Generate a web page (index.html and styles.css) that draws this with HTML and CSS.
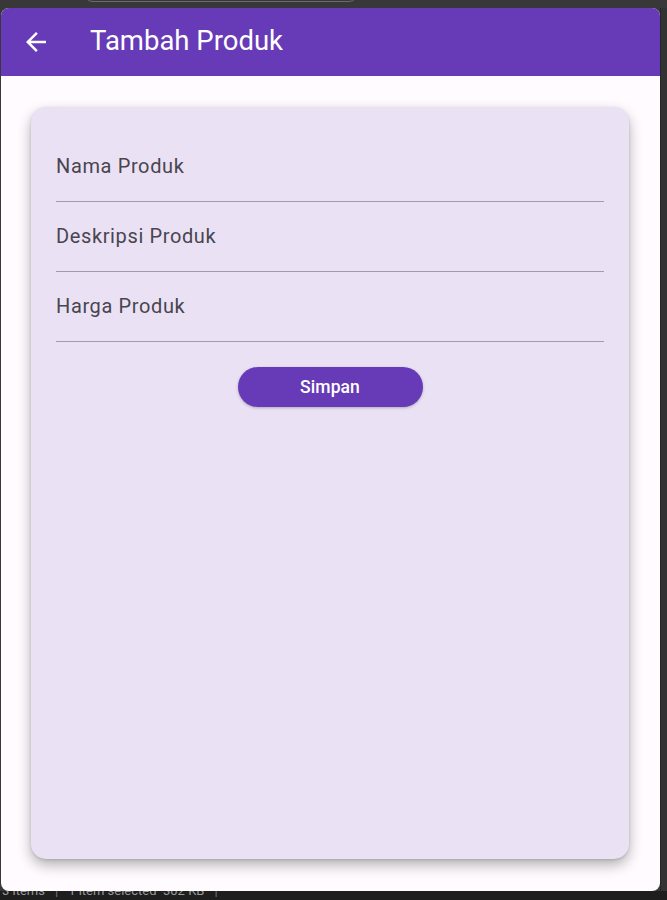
FILE: index.html
```html
<!DOCTYPE html>
<html lang="id">
<head>
<meta charset="utf-8">
<title>Tambah Produk</title>
<link rel="stylesheet" href="styles.css">
</head>
<body>
<div class="desk">
  <div class="topstrip"><div class="pill"></div></div>
  <div class="middle">
    <div class="window">
      <header class="appbar">
        <span class="back" aria-label="Kembali">
          <svg viewBox="0 0 24 24" width="30" height="30"><path fill="#ffffff" d="M20 11H7.83l5.59-5.59L12 4l-8 8 8 8 1.41-1.41L7.83 13H20v-2z"/></svg>
        </span>
        <h1 class="title">Tambah Produk</h1>
      </header>
      <main class="content">
        <section class="card">
          <div class="field"><span class="label">Nama Produk</span></div>
          <div class="field"><span class="label">Deskripsi Produk</span></div>
          <div class="field"><span class="label">Harga Produk</span></div>
          <div class="actions"><button class="btn">Simpan</button></div>
        </section>
      </main>
    </div>
    <div class="sideedge"></div>
  </div>
  <div class="status"><span>3 items</span><span class="sep">|</span><span>1 item selected&nbsp;&nbsp;302 KB</span><span class="sep">|</span></div>
</div>
</body>
</html>
```

FILE: styles.css
```css
html, body {
  margin: 0;
  padding: 0;
  background: #2c2c2c;
  overflow: hidden;
}

.desk {
  width: 667px;
  height: 900px;
  display: flex;
  flex-direction: column;
  font-family: Roboto, "Noto Sans", sans-serif;
}

.topstrip {
  height: 8px;
  background: #383838;
  overflow: hidden;
  flex: none;
}

.pill {
  margin-left: 83px;
  width: 276px;
  height: 20px;
  margin-top: -18px;
  border: 1px solid #6c6c6c;
  border-radius: 10px;
  box-sizing: border-box;
}

.middle {
  display: flex;
  height: 883px;
  flex: none;
  background: #383838;
}

.window {
  flex: none;
  margin-left: 1px;
  width: 659px;
  height: 883px;
  background: #fffbfe;
  border-radius: 8px;
  overflow: hidden;
  display: flex;
  flex-direction: column;
}

.sideedge {
  flex: 1;
  background: #333333;
  border-left: 1px solid #262626;
}

.appbar {
  height: 68px;
  flex: none;
  background: #673ab7;
  display: flex;
  align-items: center;
  padding-left: 20px;
  padding-bottom: 1px;
  box-sizing: border-box;
}

.back {
  width: 30px;
  height: 30px;
  display: flex;
}

.title {
  margin: 0 0 0 39px;
  font-family: Roboto, sans-serif;
  font-weight: 400;
  font-size: 27.5px;
  line-height: 34px;
  color: #ffffff;
  padding-bottom: 2px;
}

.content {
  flex: 1;
  padding: 31px 31px 32px 30px;
  display: flex;
}

.card {
  flex: 1;
  background: #eae2f4;
  border-radius: 15px;
  box-shadow: 0 6px 14px rgba(0, 0, 0, 0.3), 0 1px 3px rgba(0, 0, 0, 0.12);
  padding: 25px 25px 0 25px;
  display: flex;
  flex-direction: column;
}

.field {
  height: 70px;
  box-sizing: border-box;
  border-bottom: 1px solid #a29ca9;
  display: flex;
  align-items: center;
  padding-bottom: 2px;
}

.label {
  font-size: 20px;
  letter-spacing: 0.625px;
  color: #49454f;
  line-height: 24px;
}

.actions {
  display: flex;
  justify-content: center;
  margin-top: 25px;
}

.btn {
  width: 185px;
  height: 40px;
  border: none;
  border-radius: 20px;
  background: #673ab7;
  color: #ffffff;
  font-family: Roboto, sans-serif;
  font-weight: 500;
  font-size: 17.5px;
  letter-spacing: 0.1px;
  box-shadow: 0 1px 3px rgba(0, 0, 0, 0.25);
  padding: 0 0 1px 0;
}

.status {
  flex: 1;
  background: #1e1e1e;
  display: flex;
  align-items: flex-start;
  gap: 10px;
  padding-left: 2px;
  font-size: 13px;
  color: #9a9a9a;
  line-height: 13px;
  overflow: hidden;
}

.status span {
  margin-top: -7px;
}

.status .sep {
  color: #777777;
}
```
